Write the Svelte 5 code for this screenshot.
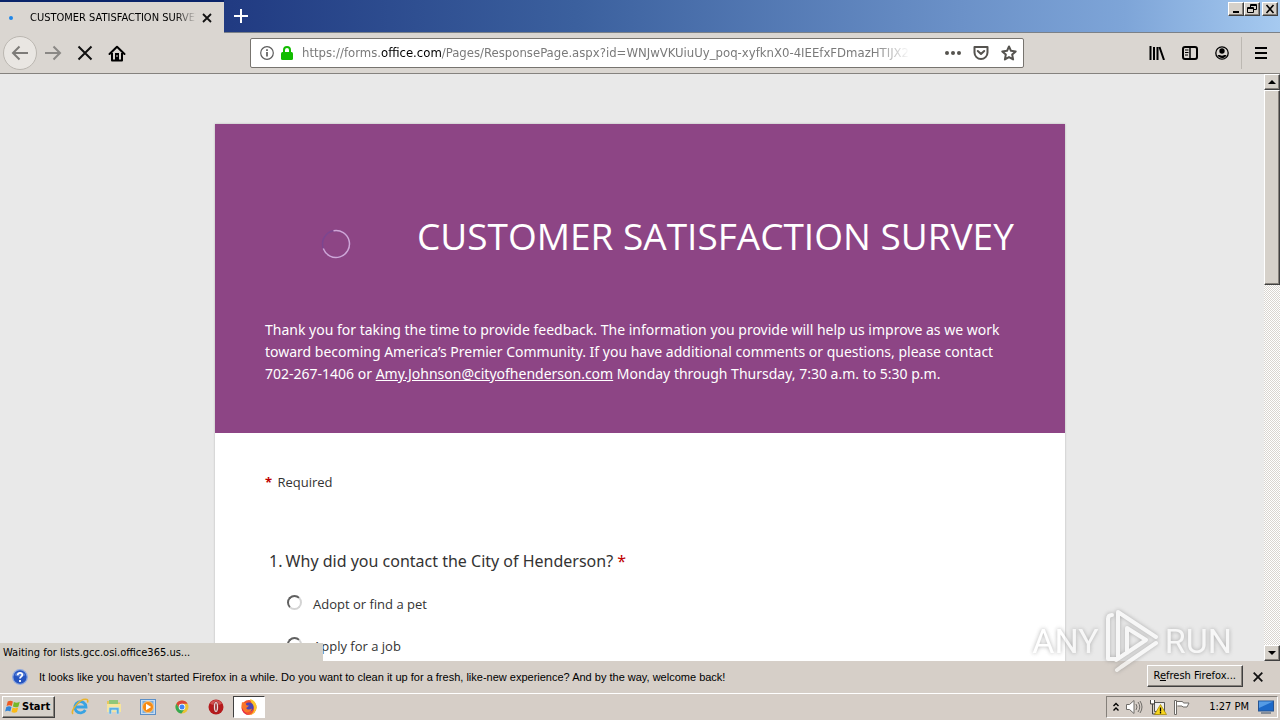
<script>
  const options = ['Adopt or find a pet', 'Apply for a job'];
  let reason = $state('');
</script>

<div class="desktop">
  <header class="tabs">
    <div class="tab">
      <span class="busy"></span>
      <span class="tab-title">CUSTOMER SATISFACTION SURVEY</span>
      <button class="plain" aria-label="Close tab">
        <svg width="10" height="10" viewBox="0 0 10 10"><path d="M1 1l8 8M9 1L1 9" stroke="#111" stroke-width="1.8" /></svg>
      </button>
    </div>
    <button class="plain new-tab" aria-label="New tab">
      <svg width="14" height="14" viewBox="0 0 14 14"><path d="M7 0v14M0 7h14" stroke="#fff" stroke-width="2" /></svg>
    </button>
    <div class="window-buttons">
      <button class="raised win" aria-label="Minimize">
        <svg width="12" height="10" viewBox="0 0 12 10"><path d="M3 8h6" stroke="#000" stroke-width="2" /></svg>
      </button>
      <button class="raised win" aria-label="Restore">
        <svg width="12" height="10" viewBox="0 0 12 10" fill="none" stroke="#000"><path d="M4.500 3V.5h6v5H8M4 1.500h7M1.500 3.500h6v5h-6zM1 4.500h7" /></svg>
      </button>
      <button class="raised win close" aria-label="Close">
        <svg width="12" height="10" viewBox="0 0 12 10"><path d="M2.500 1l7 8M9.500 1l-7 8" stroke="#000" stroke-width="1.600" /></svg>
      </button>
    </div>
  </header>

  <nav class="toolbar">
    <button class="plain back" aria-label="Back">
      <svg width="18" height="16" viewBox="0 0 18 16" fill="none" stroke="#7d7b78" stroke-width="2"><path d="M17 8H2M8.500 1.500L2 8l6.500 6.500" /></svg>
    </button>
    <button class="plain tool" aria-label="Forward">
      <svg width="18" height="16" viewBox="0 0 18 16" fill="none" stroke="#8a8885" stroke-width="2"><path d="M1 8h15M9.500 1.500L16 8l-6.500 6.500" /></svg>
    </button>
    <button class="plain tool" aria-label="Stop">
      <svg width="16" height="16" viewBox="0 0 16 16"><path d="M1.500 1.500l13 13M14.500 1.500l-13 13" stroke="#111" stroke-width="2" /></svg>
    </button>
    <button class="plain tool" aria-label="Home">
      <svg width="18" height="17" viewBox="0 0 18 17" fill="none" stroke="#000" stroke-width="2"><path d="M1.500 9L9 1.700 16.500 9" stroke-linecap="round" stroke-linejoin="round" /><path d="M4 8v7.500h10V8" stroke-linejoin="round" /><path d="M7 8h4v8H7z" fill="#000" stroke="none" /><path d="M9 10v2" stroke="#d8d4cd" stroke-width="1" /></svg>
    </button>
    <div class="address">
      <button class="plain" aria-label="Site information">
        <svg width="14" height="14" viewBox="0 0 14 14" fill="none" stroke="#5d5d5d"><circle cx="7" cy="7" r="6.300" stroke-width="1.200" /><path d="M7 6v4.500M7 3.200v1.700" stroke-width="1.700" /></svg>
      </button>
      <button class="plain" aria-label="Secure connection">
        <svg width="12" height="14" viewBox="0 0 12 14"><path d="M3 7V4a3 3 0 0 1 6 0v3" fill="none" stroke="#12bc00" stroke-width="2" /><rect y="6" width="12" height="8" rx="1.500" fill="#12bc00" /></svg>
      </button>
      <a class="url" href="#survey">https://forms.<b>office.com</b>/Pages/ResponsePage.aspx?id=WNJwVKUiuUy_poq-xyfknX0-4IEEfxFDmazHTIJX2n</a>
      <button class="plain" aria-label="Page actions">
        <svg width="16" height="4" viewBox="0 0 16 4" fill="#55534f"><circle cx="2" cy="2" r="2" /><circle cx="8" cy="2" r="2" /><circle cx="14" cy="2" r="2" /></svg>
      </button>
      <button class="plain" aria-label="Save to Pocket">
        <svg width="16" height="14" viewBox="0 0 16 14" fill="none" stroke="#55534f" stroke-width="2" stroke-linejoin="round"><path d="M1.500 1h13v5.500a6.500 6.500 0 0 1-13 0z" /><path d="M4.800 5L8 8l3.200-3" stroke-linecap="round" /></svg>
      </button>
      <button class="plain" aria-label="Bookmark this page">
        <svg width="16" height="16" viewBox="0 0 16 16" fill="none" stroke="#55534f" stroke-width="2" stroke-linejoin="round"><path d="M8 1.500l2 4.300 4.700.6-3.500 3.200.9 4.800L8 12.100l-4.100 2.300.9-4.800L1.300 6.400 6 5.800z" /></svg>
      </button>
    </div>
    <div class="tools">
      <button class="plain" aria-label="Library">
        <svg width="16" height="14" viewBox="0 0 16 14" stroke="#000" stroke-width="2"><path d="M1.500 0v14M5 1v13M8.500 1v13M10.500 1l4.500 13" /></svg>
      </button>
      <button class="plain" aria-label="Sidebars">
        <svg width="16" height="14" viewBox="0 0 16 14" fill="none" stroke="#000"><rect x="1" y="1" width="14" height="12" rx="2" stroke-width="2" /><path d="M8 1v12" stroke-width="1.500" /><path d="M3 4h3.500M3 6.500h3.500M3 9h3" /></svg>
      </button>
      <button class="plain" aria-label="Account">
        <svg width="14" height="14" viewBox="0 0 14 14"><circle cx="7" cy="7" r="6.200" fill="none" stroke="#000" stroke-width="1.300" /><circle cx="7" cy="5" r="2.700" /><path d="M2.500 9.500c2 -1 2.500.3 4.500.3s2.500-1.300 4.500-.3C10 11.500 9 12 7 12s-3.500-1-4.500-2.500z" /></svg>
      </button>
      <span class="divider"></span>
      <button class="plain" aria-label="Open menu">
        <svg width="12" height="12" viewBox="0 0 12 12" stroke="#000" stroke-width="2"><path d="M0 1h12M0 6h12M0 11h12" /></svg>
      </button>
    </div>
  </nav>

  <div class="viewport">
    <main id="survey" class="form">
      <section class="banner">
        <div class="heading">
          <div class="logo">
            <svg width="30" height="30" viewBox="0 0 30 30" fill="none" stroke-width="1.500"><circle cx="15" cy="15" r="13.500" stroke="#7c4690" /><path d="M12.500 1.700A13.500 13.500 0 1 1 2.300 19.600" stroke="#d0a6d6" /></svg>
          </div>
          <h1>CUSTOMER SATISFACTION SURVEY</h1>
        </div>
        <p>
          Thank you for taking the time to provide feedback. The information you provide will help us improve as we work<br />
          toward becoming America’s Premier Community. If you have additional comments or questions, please contact<br />
          702-267-1406 or <a href="mailto:Amy.Johnson@cityofhenderson.com">Amy.Johnson@cityofhenderson.com</a> Monday through Thursday, 7:30 a.m. to 5:30 p.m.
        </p>
      </section>
      <section class="questions">
        <div class="required"><span class="star">*</span> Required</div>
        <fieldset>
          <legend><span class="number">1.</span> Why did you contact the City of Henderson? <span class="star">*</span></legend>
          {#each options as option}
            <label><input type="radio" name="reason" value={option} bind:group={reason} /><span>{option}</span></label>
          {/each}
        </fieldset>
      </section>
    </main>
    <div class="scrollbar">
      <button class="raised arrow" aria-label="Scroll up"><svg width="8" height="4" viewBox="0 0 8 4"><path d="M4 0l4 4H0z" /></svg></button>
      <div class="raised thumb"></div>
      <button class="raised arrow last" aria-label="Scroll down"><svg width="8" height="4" viewBox="0 0 8 4"><path d="M0 0h8L4 4z" /></svg></button>
    </div>
    <div class="status">Waiting for lists.gcc.osi.office365.us...</div>
  </div>

  <aside class="notice">
    <svg width="16" height="16" viewBox="0 0 16 16"><circle cx="8" cy="8" r="7.300" fill="#2554c0" stroke="#8fa9df" stroke-width="1.300" /><path d="M2.500 6a6 5 0 0 1 11 0c-3 2-8 2-11 0z" fill="#7b9fe8" opacity=".6" /><path d="M5.700 6.200c0-3.200 4.800-3 4.600-.2C10.200 7.700 8 7.600 8 9.600M8 11v2" fill="none" stroke="#fff" stroke-width="1.800" /></svg>
    <span class="message">It looks like you haven’t started Firefox in a while. Do you want to clean it up for a fresh, like-new experience? And by the way, welcome back!</span>
    <button class="raised refresh">R<u>e</u>fresh Firefox...</button>
    <button class="plain" aria-label="Dismiss">
      <svg width="10" height="10" viewBox="0 0 10 10"><path d="M.7.7l8.600 8.600M9.300.7L.7 9.300" stroke="#111" stroke-width="1.800" /></svg>
    </button>
  </aside>

  <footer class="taskbar">
    <button class="raised start">
      <svg width="16" height="16" viewBox="0 0 16 16"><path d="M2.700 2.500c2-1.200 3.600-1 5.200 0L6.800 7C5.200 6 3.500 6 1.600 7z" fill="#ee5b23" /><path d="M8.900 3c1.800 1 3.600 1 5.800-.2l-1.200 4.600c-2 1.200-3.800 1-5.600 0z" fill="#75b82a" /><path d="M1.300 8c2-1 3.600-1 5.200 0l-1.200 4.500c-1.600-1-3.200-1-5.200 0z" fill="#3184d8" /><path d="M7.600 8.500c1.800 1 3.500 1 5.600 0L12 13c-2 1.100-3.800 1-5.500 0z" fill="#fbbb16" /></svg>
      Start
    </button>
    <div class="launch">
      <button class="plain" aria-label="Internet Explorer">
        <svg width="18" height="18" viewBox="0 0 18 18" fill="none"><path d="M14.300 12A5.600 5.600 0 1 1 15 9H4.500" stroke="#39a3e2" stroke-width="2.800" /><path d="M2 16C-1 13 9-.5 16 1.500c1 .4 1 2 .4 3" stroke="#e9b32c" stroke-width="1.500" /></svg>
      </button>
      <button class="plain" aria-label="Windows Explorer">
        <svg width="18" height="18" viewBox="0 0 18 18"><path d="M2 3h5l1 1.500h7V14H2z" fill="#e8c75d" /><path d="M4 2h9v5H4z" fill="#8fc778" /><path d="M2 6h14v8H2z" fill="#f7e59b" /><path d="M4 16V10.500q0-1 1-1h8q1 0 1 1V16h-2.500v-4h-5v4z" fill="#5caee0" stroke="#b9e1f4" stroke-width=".7" /></svg>
      </button>
      <button class="plain" aria-label="Media Player">
        <svg width="18" height="18" viewBox="0 0 18 18"><rect x="1.500" y="1.500" width="15" height="15" fill="#c7dcf1" stroke="#5b8fc7" /><rect x="3.500" y="3" width="11" height="12" fill="#79aee0" /><circle cx="9" cy="9" r="5.500" fill="#f58a13" stroke="#f9c580" /><path d="M7 5.700v6.600L12.200 9z" fill="#fff" /></svg>
      </button>
      <button class="plain" aria-label="Chrome">
        <svg width="18" height="18" viewBox="0 0 18 18"><circle cx="9" cy="9" r="6.500" fill="#eac335" /><path d="M3.400 5.700A6.500 6.500 0 0 1 14.600 5.700H9L6.200 10.500z" fill="#db4437" /><path d="M3.400 5.700a6.500 6.500 0 0 0 5 9.800L11.500 11 6.500 10.800z" fill="#36a852" /><circle cx="9" cy="9" r="3.300" fill="#fff" /><circle cx="9" cy="9" r="2.500" fill="#4285f4" /></svg>
      </button>
      <button class="plain" aria-label="Opera">
        <svg width="18" height="18" viewBox="0 0 18 18"><circle cx="9" cy="9" r="7.500" fill="#b51a1c" /><path d="M3 5.500a7 7 0 0 1 12 0c-3 2-9 2-12 0z" fill="#dd6a67" opacity=".7" /><ellipse cx="9" cy="9" rx="2.300" ry="5.300" fill="#fff" stroke="#7d0c0e" stroke-width=".6" /><ellipse cx="9" cy="9" rx=".8" ry="4" fill="#8d1012" /></svg>
      </button>
      <button class="plain running" aria-label="Firefox">
        <svg width="18" height="18" viewBox="0 0 18 18"><circle cx="9" cy="9.500" r="7.500" fill="#f2552c" /><path d="M10 1c4 1 7 4.500 6.500 9-.5 4-4 7-8 7 4-1 6-4 5.500-7S11 5 10 1z" fill="#fcc52c" /><circle cx="9" cy="9" r="4.600" fill="#4b45b5" /><path d="M2 4c1 1 2.500.6 4 1.500-.3 1.800 1 2.200 3 2-1 2-2.500 1.500-2.700 2.700.7 1.800 3.700 1.800 5.700.3-.5 4-6 5-8.500 2.500C1.500 11 1.300 7 2 4z" fill="#f9762a" /><path d="M1.700 9.500c0 4 3.300 7.500 7.500 7.300-3.200-.8-5.500-3-7.500-7.300z" fill="#e3214f" /></svg>
      </button>
    </div>
    <div class="tray">
      <svg width="6" height="10" viewBox="0 0 6 10" fill="none" stroke="#000" stroke-width="1.400"><path d="M.5 4L3 1.500 5.500 4M.5 8.500L3 6l2.500 2.500" /></svg>
      <svg width="18" height="16" viewBox="0 0 18 16" fill="#fff" stroke="#6f6c68"><path d="M1.500 5.500h3L9 1.500v13l-4.500-4h-3z" /><path d="M11 5q2 3 0 6M13 3q3.500 5 0 10M15 2q4 6 0 12" fill="none" /></svg>
      <svg width="18" height="16" viewBox="0 0 18 16"><path d="M5.500 3.500h10v9h-10z" fill="#eee" stroke="#555" /><path d="M1.500 1v4h4V1M3.500 5v10h7" fill="none" stroke="#444" /><path d="M2 1h3v3H2z" fill="#fff" /><path d="M11.500 5.500L17.500 15.500h-12z" fill="#f7d51d" stroke="#9d8100" stroke-width=".7" /><path d="M11.500 8.500v4M11.500 13v1.500" stroke="#000" stroke-width="1.300" /></svg>
      <svg width="18" height="16" viewBox="0 0 18 16" fill="#fff" stroke="#6f6c68"><path d="M3.500 2.500h6l1 1.500h5.500l-2 4h-4l-1-1H4.500" /><path d="M1.500 1.500h2v14h-2z" /></svg>
      <time>1:27 PM</time>
      <svg width="16" height="14" viewBox="0 0 16 14"><rect x=".5" y="1" width="15" height="10" fill="#1d69c8" stroke="#275491" /><path d="M1 1.500h14L1 8z" fill="#559be5" /><path d="M3 13h10" stroke="#364c66" /></svg>
    </div>
  </footer>

  <div class="watermark" aria-hidden="true">
    <span>ANY</span>
    <svg width="54" height="64" viewBox="0 0 54 64" fill="none" stroke="#fff" stroke-width="4" stroke-linejoin="round" stroke-linecap="round"><path d="M11 50H3V10q0-4 4-4M13 48V3l38 25M22 44V19l19 12-30 20M51 34L16 58l-4 3" /></svg>
    <span>RUN</span>
  </div>
</div>

<style>
  :global(body) { margin: 0; overflow: hidden; }
  .desktop {
    position: relative;
    display: flex;
    flex-direction: column;
    height: 100vh;
    background: #d6cec7;
    color: #000;
    font: 11px/14px 'DejaVu Sans Condensed', 'DejaVu Sans', sans-serif;
  }
  svg { display: block; flex: none; }
  button { font: inherit; color: inherit; }
  .plain {
    display: flex;
    align-items: center;
    justify-content: center;
    padding: 0;
    border: 0;
    background: none;
  }
  .raised {
    box-sizing: border-box;
    border: 1px solid;
    border-color: #fff #404040 #404040 #fff;
    box-shadow: inset -1px -1px #87827c;
    background: #d6d1ca;
  }
  .tabs {
    display: flex;
    box-sizing: border-box;
    height: 33px;
    flex: none;
    border-bottom: 1px solid #7b8188;
    background: linear-gradient(90deg, #12297a 0%, #213b82 18%, #3b609e 45%, #6b91c8 75%, #7ea5d8 88%, #a6caf0 100%);
  }
  .tab {
    display: flex;
    align-items: center;
    box-sizing: border-box;
    width: 224px;
    height: 33px;
    padding: 0 12px 0 9px;
    border-top: 2px solid #0a246a;
    background: #dad6d1;
  }
  .busy { width: 4px; height: 4px; border-radius: 50%; background: #1f86e8; }
  .tab-title {
    flex: 1;
    margin: 0 6px 0 17px;
    overflow: hidden;
    white-space: nowrap;
    mask-image: linear-gradient(90deg, #000 88%, transparent);
  }
  .new-tab { width: 34px; height: 32px; }
  .window-buttons { display: flex; margin: 2px 2px 0 auto; }
  .win { display: flex; align-items: center; justify-content: center; width: 16px; height: 14px; padding: 0; }
  .close { margin-left: 2px; }
  .toolbar {
    display: flex;
    align-items: center;
    box-sizing: border-box;
    height: 41px;
    flex: none;
    padding: 0 13px 0 3px;
    border-bottom: 1px solid #85827e;
    background: #dad6d1;
  }
  .back {
    box-sizing: border-box;
    width: 34px;
    height: 34px;
    border: 1px solid #bbb7b1;
    border-radius: 50%;
    background: #e9e6e2;
  }
  .tool { width: 32px; height: 32px; }
  .address {
    display: flex;
    flex: 1;
    align-items: center;
    gap: 7px;
    box-sizing: border-box;
    min-width: 0;
    height: 30px;
    margin: 0 125px 0 117px;
    padding: 0 6px 0 9px;
    border: 1px solid #77746f;
    border-radius: 2px;
    background: #fff;
  }
  .address button + button { margin-left: 5px; }
  .address button:nth-child(2) { margin-left: 0; }
  .url {
    flex: 1;
    margin: 0 28px 0 2px;
    overflow: hidden;
    color: #7a7a7a;
    font: 13px/18px 'DejaVu Sans Condensed', 'DejaVu Sans', sans-serif;
    text-decoration: none;
    white-space: nowrap;
    mask-image: linear-gradient(90deg, #000 94%, transparent);
  }
  .url b { color: #000; font-weight: 400; }
  .tools { display: flex; align-items: center; gap: 16px; }
  .tools button + button { margin-left: 1px; }
  .divider { width: 1px; height: 32px; margin: 0 -3px 0 -4px; background: #bcb8b2; }
  .viewport {
    position: relative;
    flex: 1;
    min-height: 0;
    padding: 50px 16px 0;
    overflow: hidden;
    background: #e9e9e9;
  }
  .form {
    max-width: 850px;
    margin: 0 auto;
    background: #fff;
    box-shadow: 0 0 2px #b5b5b5;
    color: #333;
    font: 14px/20px 'Open Sans', 'Noto Sans', sans-serif;
  }
  .banner { padding: 50px 50px 48px; background: #8d4585; color: #fff; }
  .heading { display: flex; align-items: center; height: 140px; }
  .logo { display: flex; justify-content: center; width: 142px; }
  h1 { margin: -16px 0 0 10px; font-size: 37px; line-height: 48px; font-weight: 400; white-space: nowrap; }
  p { margin: 5px 0 0; font-family: 'Noto Sans', sans-serif; line-height: 22px; white-space: nowrap; }
  p a { color: inherit; }
  .questions { padding: 39px 50px 60px; }
  .required { font-size: 13px; }
  .star { color: #c00000; }
  .required .star { margin-right: 2px; font-weight: 700; }
  fieldset { margin: 0; padding: 0; border: 0; }
  legend { padding: 57px 0 21px 4px; font-family: 'Noto Sans', sans-serif; font-size: 16px; line-height: 24px; }
  .number { margin-right: -1px; }
  label { display: flex; align-items: center; height: 20px; margin: 0 0 22px 22px; font-size: 13px; }
  input {
    appearance: none;
    box-sizing: border-box;
    width: 15px;
    height: 15px;
    margin: 0 11px 4px 0;
    border: 2px solid;
    border-color: #606060 #d4d4d4 #d4d4d4 #606060;
    border-radius: 50%;
  }
  .scrollbar {
    position: absolute;
    inset: 0 0 0 auto;
    display: flex;
    flex-direction: column;
    width: 16px;
    background: repeating-conic-gradient(#fff 0 25%, #d9d5d0 0 50%) 0 0 / 2px 2px;
  }
  .arrow { display: flex; align-items: center; justify-content: center; width: 16px; height: 16px; padding: 0; }
  .thumb { height: 33.3%; }
  .last { margin-top: auto; }
  .status {
    position: absolute;
    bottom: 0;
    left: 0;
    box-sizing: border-box;
    width: 323px;
    height: 18px;
    padding: 3px;
    background: #d4d0c8;
  }
  .notice {
    display: flex;
    align-items: center;
    height: 32px;
    flex: none;
    padding: 0 17px 0 12px;
    background: #d6cfc8;
  }
  .message { flex: 1; margin-left: 11px; font-family: 'Liberation Sans', sans-serif; white-space: nowrap; }
  .refresh { height: 22px; margin: 0 10px 2px 0; padding: 0 6px; }
  .taskbar {
    display: flex;
    align-items: center;
    box-sizing: border-box;
    height: 27px;
    flex: none;
    padding: 0 2px;
    border-top: 1px solid #fff;
  }
  .start { display: flex; align-items: center; gap: 1px; height: 22px; padding: 0 4px 0 2px; font-weight: 700; }
  .launch { display: flex; margin-left: 8px; }
  .launch button { width: 34px; height: 22px; }
  .launch .running {
    box-sizing: border-box;
    width: 32px;
    border: 1px solid;
    border-color: #404040 #fff #fff #404040;
    background: #fff;
  }
  .tray {
    display: flex;
    align-items: center;
    gap: 6px;
    box-sizing: border-box;
    height: 22px;
    margin-left: auto;
    padding: 0 3px 0 6px;
    border: 1px solid;
    border-color: #85807a #fff #fff #85807a;
  }
  time { margin: 0 3px 0 12px; white-space: nowrap; }
  .watermark {
    position: absolute;
    right: 48px;
    bottom: 47px;
    display: flex;
    align-items: center;
    gap: 6px;
    color: #fff;
    font: 34px/36px Roboto, sans-serif;
    opacity: .65;
    filter: drop-shadow(0 0 2px #888);
    pointer-events: none;
  }
</style>
